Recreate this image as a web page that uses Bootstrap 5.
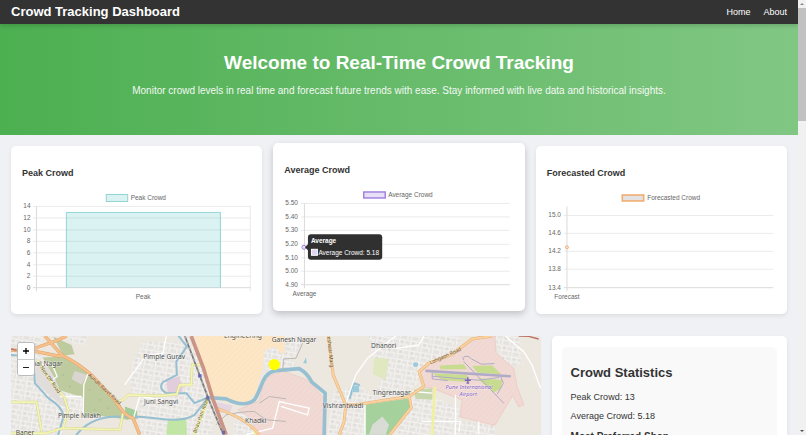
<!DOCTYPE html>
<html lang="en">
<head>
<meta charset="utf-8">
<meta name="viewport" content="width=device-width, initial-scale=1">
<title>Crowd Tracking Dashboard</title>
<link href="https://cdn.jsdelivr.net/npm/bootstrap@5.3.0/dist/css/bootstrap.min.css" rel="stylesheet">
<style>
  body { font-family: "Liberation Sans", Arial, sans-serif; font-size: 9px; line-height: 12px; color: #333; background: #f0f1f5; }
  .topbar { background: #333; padding: 4px 11px; box-shadow: 0 2px 4px rgba(0,0,0,.15); z-index: 2; }
  .topbar .navbar-brand { font-size: 13px; line-height: 16px; color: #fff; }
  .topbar .nav-link { color: #fff; font-size: 9px; line-height: 16px; }
  .topbar .navbar-nav { gap: 13px; }
  .hero { background: linear-gradient(to right, #4caf50, #81c784); padding: 28px 11px 37px; color: #fff; }
  .hero h1 { font-size: 19px; line-height: 22px; margin-bottom: 10px; }
  .hero p { font-size: 10px; line-height: 14px; opacity: .92; }
  .content-area { padding: 11px; }
  .chart-grid { display: grid; grid-template-columns: repeat(3, 1fr); gap: 11px; margin-bottom: 22px; }
  .panel { background: #fff; border: 0; border-radius: 5px; padding: 11px; box-shadow: 0 2px 4px rgba(0,0,0,.08); }
  .panel-raised { transform: translateY(-3px); box-shadow: 0 3px 7px rgba(0,0,0,.2); }
  .panel h3 { font-size: 9px; line-height: 14px; margin: 9px 0 10px; }
  .chart text { font-size: 13px; fill: #666; }
  .chart .grid-lines { stroke: #ebebeb; stroke-width: 2; fill: none; }
  .chart .axis-lines { stroke: #dadada; stroke-width: 2; fill: none; }
  .chart .tip text { fill: #fff; }
  .lower-grid { display: grid; grid-template-columns: 9fr 4fr; gap: 11px; }
  .map-box { border-radius: 4px; background: #ece7df; }
  .map-box text { font-family: "Noto Sans", sans-serif; font-size: 20px; fill: #4c4c4c; stroke: #fff; stroke-opacity: .5; stroke-width: 3px; paint-order: stroke; }
  .map-box .road-name { font-size: 15px; fill: #65502f; stroke-opacity: .2; }
  .map-box .air-name { font-size: 17px; font-style: italic; fill: #8461c4; }
  .zoom-ctl { left: 6px; top: 6px; border: 1px solid #bbb; border-radius: 3px; }
  .zoom-ctl button { width: 16px; height: 16px; background: #fff; color: #000; }
  .zoom-ctl button + button { border-top: 1px solid #ccc !important; }
  .stats-panel { padding: 11px 10px; }
  .stats { background: #f9f9f9; border-radius: 5px; padding: 9px; }
  .stats h2 { font-size: 13px; line-height: 16px; margin: 9px 0 10px; }
  .stats p { margin-bottom: 7px; }
  .stats h3 { font-size: 10px; line-height: 12px; margin: 9px 0; }
  .scroll-rail { width: 8px; background: #f1f1f1; padding: 2px 0; }
  .scroll-thumb { height: 26vh; background: #c1c1c1; margin-top: 2px; }
</style>
<script src="https://cdn.jsdelivr.net/npm/bootstrap@5.3.0/dist/js/bootstrap.bundle.min.js"></script>
</head>
<body>
<div class="d-flex vh-100 overflow-hidden">
  <div class="flex-grow-1 overflow-hidden">
    <header>
      <nav class="navbar navbar-expand topbar position-relative">
        <a class="navbar-brand fw-bold p-0 m-0" href="#">Crowd Tracking Dashboard</a>
        <div class="navbar-nav ms-auto">
          <a class="nav-link p-0" href="#">Home</a>
          <a class="nav-link p-0" href="#about">About</a>
        </div>
      </nav>
    </header>
    <section class="hero text-center">
      <h1 class="fw-bold">Welcome to Real-Time Crowd Tracking</h1>
      <p class="mb-0">Monitor crowd levels in real time and forecast future trends with ease. Stay informed with live data and historical insights.</p>
    </section>
    <main class="content-area">
      <section class="chart-grid">
        <article class="card panel">
          <h3 class="fw-bold">Peak Crowd</h3>
          <svg class="chart d-block w-100" viewBox="0 0 460 226" role="img" aria-label="Peak crowd bar chart">
            <rect x="169" y="9" width="43" height="14" fill="#dbf2f2" stroke="#93d3d3" stroke-width="2"/>
            <text x="218" y="20">Peak Crowd</text>
            <path class="grid-lines" d="M22 33H459M22 56H459M22 80H459M22 103H459M22 126H459M22 150H459M22 173H459M458 33V203"/>
            <path class="axis-lines" d="M22 196H459M29 33V203"/>
            <rect x="89" y="45" width="309" height="151" fill="#4bc0c0" fill-opacity=".2"/>
            <path d="M89 196V45H398V196" fill="none" stroke="#93d3d3" stroke-width="2"/>
            <g text-anchor="end">
              <text x="17" y="37">14</text><text x="17" y="60">12</text><text x="17" y="84">10</text><text x="17" y="107">8</text>
              <text x="17" y="130">6</text><text x="17" y="154">4</text><text x="17" y="177">2</text><text x="17" y="200">0</text>
            </g>
            <text x="243" y="219" text-anchor="middle">Peak</text>
          </svg>
        </article>
        <article class="card panel panel-raised">
          <h3 class="fw-bold">Average Crowd</h3>
          <svg class="chart d-block w-100" viewBox="0 0 460 226" role="img" aria-label="Average crowd line chart">
            <rect x="160" y="10" width="43" height="12" fill="#e6dff6" stroke="#a582e0" stroke-width="3"/>
            <text x="209" y="20">Average Crowd</text>
            <path class="grid-lines" d="M34 33H453M34 60H453M34 87H453M34 115H453M34 142H453M34 169H453"/>
            <path class="axis-lines" d="M34 196H453M41 33V203"/>
            <g text-anchor="end">
              <text x="28" y="37">5.50</text><text x="28" y="64">5.40</text><text x="28" y="91">5.30</text><text x="28" y="119">5.20</text>
              <text x="28" y="146">5.10</text><text x="28" y="173">5.00</text><text x="28" y="200">4.90</text>
            </g>
            <text x="41" y="219" text-anchor="middle">Average</text>
            <circle cx="40" cy="121" r="4" fill="#e9e2fb" stroke="#9e86d8" stroke-width="2"/>
            <g class="tip">
              <rect x="48" y="95" width="149" height="51" rx="6" fill="#303030"/>
              <path d="M42 121L49 114V128Z" fill="#303030"/>
              <text x="54" y="113" font-weight="bold">Average</text>
              <rect x="55" y="125" width="12" height="12" fill="#ded3f3" stroke="#fff" stroke-width="2"/>
              <text x="69" y="136">Average Crowd: 5.18</text>
            </g>
          </svg>
        </article>
        <article class="card panel">
          <h3 class="fw-bold">Forecasted Crowd</h3>
          <svg class="chart d-block w-100" viewBox="0 0 460 226" role="img" aria-label="Forecasted crowd line chart">
            <rect x="151" y="10" width="43" height="12" fill="#e3e1e1" stroke="#f2aa6b" stroke-width="3"/>
            <text x="201" y="20">Forecasted Crowd</text>
            <path class="grid-lines" d="M34 51H454M34 87H454M34 123H454M34 159H454"/>
            <path class="axis-lines" d="M34 196H454M40 33V203"/>
            <g text-anchor="end">
              <text x="28" y="55">15.0</text><text x="28" y="91">14.6</text><text x="28" y="127">14.2</text><text x="28" y="163">13.8</text><text x="28" y="200">13.4</text>
            </g>
            <text x="40" y="219" text-anchor="middle">Forecast</text>
            <circle cx="40" cy="115" r="3" fill="#f6e2d2" stroke="#eeb07e" stroke-width="2"/>
          </svg>
        </article>
      </section>
      <section class="lower-grid">
        <div class="map-box position-relative overflow-hidden">
          <svg class="d-block w-100" viewBox="33 33 1593 660" role="img" aria-label="Street map of north Pune">
            <defs>
              <pattern id="blocks" width="34" height="30" patternUnits="userSpaceOnUse" patternTransform="rotate(9)">
                <rect width="34" height="30" fill="#e6e3e0"/>
                <path d="M0 4H34M5 4V30M20 4V18M5 18H34M28 18V30" stroke="#f8f7f5" stroke-width="3" fill="none"/>
                <path d="M10 8h6v5h-6zM24 23h3M11 23h7" stroke="#dedad5" fill="#dedad5"/>
              </pattern>
              <pattern id="hatch" width="12" height="12" patternUnits="userSpaceOnUse" patternTransform="rotate(45)">
                <rect width="12" height="12" fill="#f0dad5"/><path d="M2 0V12" stroke="#f3cfca" stroke-width="2"/>
              </pattern>
              <pattern id="works" width="12" height="12" patternUnits="userSpaceOnUse" patternTransform="rotate(45)">
                <rect width="12" height="12" fill="#fce6c6"/><path d="M2 0V12" stroke="#fbdfb8" stroke-width="2"/>
              </pattern>
            </defs>
            <rect x="33" y="33" width="1593" height="660" fill="#ece7df"/>
            <!-- built-up areas -->
            <g fill="url(#blocks)">
              <path d="M33 33H130L120 90 165 160 200 240 190 330H33Z"/>
              <path d="M430 50H540L560 80 530 150 490 190 505 210H400L390 180 400 110Z"/>
              <path d="M420 215H640V330H420ZM180 195L250 215V270H200ZM205 33H265L250 60 220 55Z"/>
              <path d="M560 33L600 100 640 215 640 330H540V33Z"/>
              <path d="M790 75L830 65 870 90 890 120 850 135 800 140ZM855 33H910L890 95 860 90Z"/>
              <path d="M1000 200L1080 180 1130 220 1100 330H985Z"/>
              <path d="M1110 33H1390L1360 90 1280 110 1255 180 1180 215 1130 200 1155 150 1120 100Z"/>
              <path d="M1240 220L1300 215 1380 250 1385 290 1490 300V330H1190Z"/>
              <path d="M1485 33H1560L1570 120 1530 130 1500 80ZM710 260L790 250 800 330H700Z"/>
            </g>
            <!-- bare and institutional plots -->
            <path d="M105 110L155 118 172 155 185 195 200 250 170 230 110 175Z" fill="#e0dddb"/>
            <!-- greens -->
            <g fill="#bdcb9f">
              <path d="M128 98L190 95 265 145 360 235 385 285 300 273 250 275 250 218 180 196 165 160Z"/>
              <path d="M160 35L215 60 224 88 190 92Z"/>
            </g>
            <path d="M375 245L412 258 414 282 380 284Z" fill="#a2cc99"/>
            <path d="M225 138L263 150 245 180 215 162Z" fill="#dad5d0"/>
            <path d="M505 285L560 278 562 330H500Z" fill="#c0e5a4"/>
            <g fill="#9fb184"><circle cx="210" cy="185" r="2"/><circle cx="270" cy="195" r="2"/><circle cx="300" cy="225" r="2"/><circle cx="285" cy="255" r="2"/><circle cx="325" cy="250" r="2"/><circle cx="190" cy="150" r="2"/></g>
            <path d="M500 165L540 155 550 200 505 208Z" fill="#e2cddd"/>
            <path d="M1125 98L1170 102 1160 165 1122 148Z" fill="#dfe8c0"/>
            <path d="M1098 240L1232 220 1235 250 1172 330H1098Z" fill="#a5d19d"/>
            <path d="M1120 300L1150 275 1170 300 1160 330H1110Z" fill="#d9dcd5"/>
            <path d="M1245 195L1300 190 1300 225 1250 222Z" fill="#c8d6ad"/>
            <!-- industrial and military land -->
            <path d="M586 33H857L854 92 825 65 795 75 790 125 770 205 740 238 690 235 630 213 607 110Z" fill="url(#works)"/>
            <path d="M640 230L700 242 690 265 660 262Z" fill="#e5d5e3"/>
            <path d="M795 160L850 138 925 165 975 220 980 330H770L760 285 715 255 780 228Z" fill="url(#hatch)" stroke="#ecc8c2" stroke-width="2"/>
            <path d="M1400 60L1440 33H1488L1492 85 1525 112 1545 130 1555 185 1576 240 1560 246 1542 212 1520 248 1488 302 1384 276 1390 225 1300 190 1275 185 1265 140 1290 115 1360 90Z" fill="url(#hatch)" stroke="#edc4be" stroke-width="2"/>
            <path d="M1322 122L1395 118 1405 133 1325 133ZM1420 123L1480 122 1508 148 1435 143ZM1300 145L1405 150 1415 172 1330 165ZM1435 160L1512 165 1505 192 1485 203Z" fill="#c8dc90"/>
            <g fill="none" stroke="#b0abc6" stroke-linecap="round">
              <path d="M1283 138L1533 154" stroke-width="8"/>
              <path d="M1395 110L1515 235M1300 154L1440 166 1500 158M1395 105q-8-8 5-11q12-2 18 8l30 16 38-2" stroke-width="3"/>
              <path d="M1300 144v18l45 5M1506 155l8 20-18 32" stroke-width="3"/>
            </g>
            <!-- water -->
            <g fill="none" stroke="#96bfd1" stroke-linejoin="round" stroke-linecap="round">
              <path d="M33 90L100 95 105 175 145 220Q200 255 188 285L175 330" stroke-width="6"/>
              <path d="M230 330Q270 280 340 276T480 282T585 270L627 218" stroke-width="6"/>
              <path d="M537 33L562 65 530 110 532 150 490 172Q475 190 500 205L560 205 585 235 625 218" stroke-width="6"/>
              <path d="M625 218L680 222Q735 250 765 225C790 190 785 145 830 137L900 131Q925 145 938 172L978 205 975 330" stroke-width="11"/>
              <path d="M1055 200L1065 175 1080 180M1058 200L1052 220" stroke-width="6"/>
            </g>
            <path d="M912 115l8-17 3 17zM1062 182h18v20h-20zM1242 118a8 8 0 1 0 16 0 8 6 0 1 0-16 0" fill="#9ccbdc"/>
            <!-- minor streets -->
            <g fill="none" stroke="#fff" stroke-width="4" stroke-linejoin="round">
              <path d="M265 145L252 180 250 270M115 120L155 115 172 155 150 170M180 215H245"/>
              <path d="M740 330L820 310 840 230 860 235 930 250 925 270 845 245M400 285L420 215 490 225M375 180L440 90 490 85 500 33"/>
              <path d="M1190 33L1105 100 1070 150 1040 235M1190 70L1260 60 1275 33M1240 200L1300 205M1370 210V330M1270 290H1385L1380 320M1440 290V330M1098 240V330"/>
              <path d="M1520 33L1575 80 1600 120 1626 190"/>
            </g>
            <path d="M650 300L680 270Q730 260 765 260L800 285 860 290M780 235L810 215 860 222M850 140L853 102 890 100 910 55" fill="none" stroke="#bcb6b4" stroke-width="3"/>
            <!-- yellow roads -->
            <g fill="none" stroke-linejoin="round">
              <path d="M112 105L150 165 192 215 205 255 190 310 140 325H33M33 232H110L125 320M190 310L360 315 370 265M345 232L370 225 385 210 480 213 532 208 540 180 580 180M540 183L575 178 578 118 610 120" stroke="#d8d598" stroke-width="8"/>
              <path d="M112 105L150 165 192 215 205 255 190 310 140 325H33M33 232H110L125 320M190 310L360 315 370 265M345 232L370 225 385 210 480 213 532 208 540 180 580 180M540 183L575 178 578 118 610 120" stroke="#f3f5b2" stroke-width="5"/>
              <path d="M1308 185L1300 330M625 225L585 330M770 330L765 315" stroke="#f0f19c" stroke-width="8"/>
            </g>
            <!-- trunk roads -->
            <g fill="none" stroke-linejoin="round">
              <path d="M135 33L185 90Q235 115 275 150L345 225Q375 275 400 280L420 330M33 75L110 80 185 95M105 70L175 45 200 33" stroke="#dca46f" stroke-width="10"/>
              <path d="M135 33L185 90Q235 115 275 150L345 225Q375 275 400 280L420 330M33 75L110 80 185 95M105 70L175 45 200 33" stroke="#f7c08a" stroke-width="7"/>
              <path d="M650 250Q740 280 780 330M988 33L1002 150 1040 240 1035 290 1020 330M1040 240L1080 238 1230 215 1275 185 1260 140 1290 115 1360 88 1420 42 1480 33M1230 215L1237 248 1172 330" stroke="#e5b278" stroke-width="9"/>
              <path d="M650 250Q740 280 780 330M988 33L1002 150 1040 240 1035 290 1020 330M1040 240L1080 238 1230 215 1275 185 1260 140 1290 115 1360 88 1420 42 1480 33M1230 215L1237 248 1172 330" stroke="#fad2a0" stroke-width="6"/>
              <path d="M575 33L612 130 640 222 680 330" stroke="#cb9484" stroke-width="11"/>
              <path d="M556 33L600 150 632 235 672 330" stroke="#777" stroke-width="5"/>
              <path d="M556 33L600 150 632 235 672 330" stroke="#dedede" stroke-width="2" stroke-dasharray="9 9"/>
            </g>
            <path d="M1560 33L1590 34 1620 42M33 72L50 76" stroke="#bb7366" stroke-width="4" fill="none"/>
            <g fill="#6464b4"><path d="M596 148h10v10h-10zM620 215h9v9h-9zM668 318h9v9h-9z"/></g>
            <path d="M1407 157v18M1398 166h18M1403 175h8" stroke="#8461c4" stroke-width="4" fill="none"/>
            <circle cx="825" cy="119" r="17" fill="#ff0"/>
            <!-- place names -->
            <g>
              <text x="97" y="123">hal Nagar</text>
              <text x="431" y="103">Pimple Gurav</text>
              <text x="433" y="237">Juni Sangvi</text>
              <text x="174" y="279">Pimple Nilakh</text>
              <text x="47" y="332">Baner</text>
              <text x="674" y="38">Engineering</text>
              <text x="817" y="50">Ganesh Nagar</text>
              <text x="737" y="295">Khadki</text>
              <text x="971" y="250">Vishrantwadi</text>
              <text x="1116" y="70">Dhanori</text>
              <text x="1120" y="210">Tingrenagar</text>
              <text class="air-name" x="1340" y="193">Pune International</text>
              <text class="air-name" x="1382" y="213">Airport</text>
            </g>
            <text class="road-name" transform="translate(264 152) rotate(43)">Aundh Ravet Road</text>
            <text class="road-name" transform="translate(120 128) rotate(55)">New DP Road</text>
            <text class="road-name" transform="translate(590 326) rotate(-70)">Bhau Patil Road</text>
            <text class="road-name" transform="translate(984 36) rotate(84)">eshwar Marg</text>
            <text class="road-name" transform="translate(1295 118) rotate(-24)">Lohgaon Road</text>
          </svg>
          <div class="zoom-ctl position-absolute d-flex flex-column overflow-hidden">
            <button class="border-0 p-0 d-flex align-items-center justify-content-center" type="button" aria-label="Zoom in">
              <svg width="8" height="8" viewBox="0 0 8 8" aria-hidden="true"><path d="M4 1V7M1 4H7" stroke="#000" stroke-width="1.3"/></svg>
            </button>
            <button class="border-0 p-0 d-flex align-items-center justify-content-center" type="button" aria-label="Zoom out">
              <svg width="8" height="8" viewBox="0 0 8 8" aria-hidden="true"><path d="M1 4.5H7" stroke="#222" stroke-width="1"/></svg>
            </button>
          </div>
        </div>
        <aside class="card panel stats-panel">
          <div class="stats">
            <h2 class="fw-bold">Crowd Statistics</h2>
            <p>Peak Crowd: 13</p>
            <p>Average Crowd: 5.18</p>
            <h3 class="fw-bold">Most Preferred Shop</h3>
          </div>
        </aside>
      </section>
    </main>
  </div>
  <div class="scroll-rail flex-shrink-0 d-flex flex-column" aria-hidden="true">
    <svg class="d-block mx-auto flex-shrink-0" width="4" height="4" viewBox="0 0 4 4"><path d="M0 3L2 1L4 3Z" fill="#888"/></svg>
    <div class="scroll-thumb flex-shrink-0"></div>
    <svg class="d-block mx-auto mt-auto flex-shrink-0" width="4" height="4" viewBox="0 0 4 4"><path d="M0 1L2 3L4 1Z" fill="#505050"/></svg>
  </div>
</div>
</body>
</html>
